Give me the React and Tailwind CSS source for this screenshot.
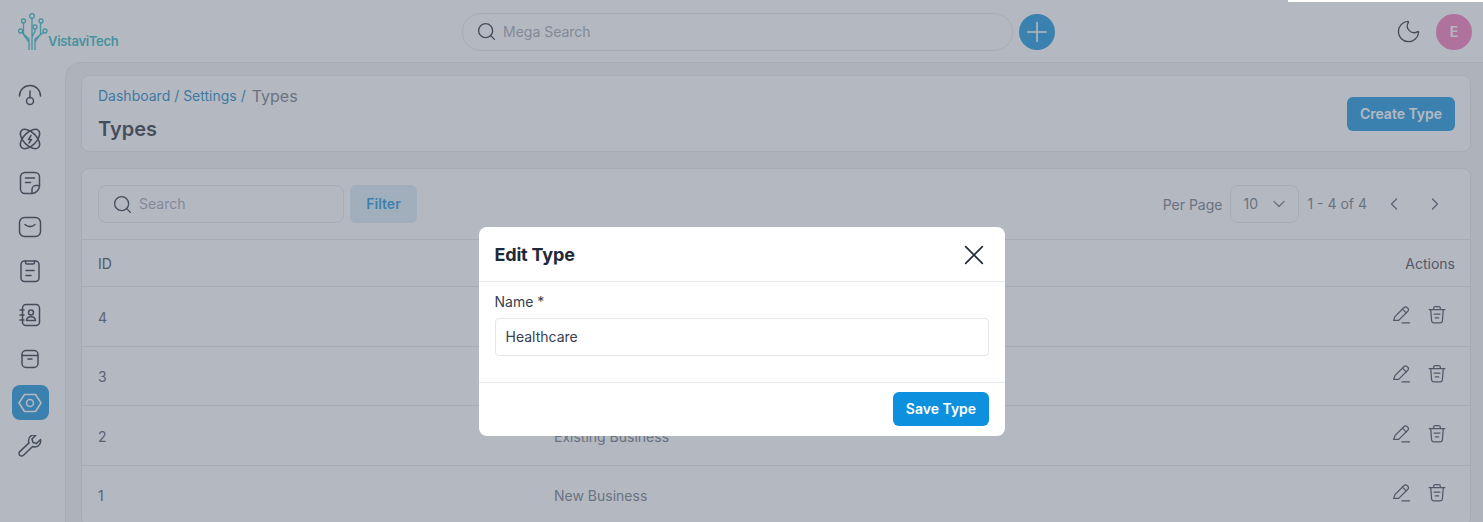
import { ChevronDown, ChevronLeft, ChevronRight, Moon, Plus, Search } from 'lucide-react'

const Icon = ({ children, className = 'text-[#1f2937]', size = 24 }) => (
  <svg width={size} height={size} viewBox="0 0 24 24" fill="none" stroke="currentColor" strokeWidth="1.5" strokeLinecap="round" strokeLinejoin="round" className={className}>
    {children}
  </svg>
)

const navIcons = [
  <>
    <path d="M1.500 13a10.500 10.500 0 0 1 21 0" />
    <path d="M12 8v6.500" />
    <circle cx="12" cy="18" r="3.500" />
  </>,
  <>
    <ellipse cx="12" cy="12" rx="12" ry="6.500" transform="rotate(45 12 12)" />
    <ellipse cx="12" cy="12" rx="12" ry="6.500" transform="rotate(-45 12 12)" />
    <path d="M13 8.500 10.500 12.500h3L11 16" />
  </>,
  <>
    <path d="M14 22.500H7a4.500 4.500 0 0 1-4.500-4.500V6A4.500 4.500 0 0 1 7 1.500h10A4.500 4.500 0 0 1 21.500 6v8.500a8 8 0 0 1-7.500 8z" />
    <path d="M21.500 14.500H18a4 4 0 0 0-4 4v4" />
    <path d="M7.500 7h9M7.500 11.500h5" />
  </>,
  <>
    <rect x="1.500" y="2.500" width="21" height="19" rx="5" />
    <path d="M7 9.500c3.300 2.800 6.700 2.800 10 0" />
  </>,
  <>
    <rect x="3" y="2" width="18" height="20.500" rx="3.500" />
    <path d="M7.500 2v1.500A1.500 1.500 0 0 0 9 5h6a1.500 1.500 0 0 0 1.500-1.500V2" />
    <path d="M8 11.500h8M8 16.500h5" />
  </>,
  <>
    <rect x="4.500" y="1.500" width="17" height="21" rx="3.500" />
    <circle cx="13" cy="9.500" r="2.500" />
    <path d="M8.500 17.500c.3-2.500 2.300-3.800 4.500-3.800s4.200 1.300 4.500 3.800zM2 7h4M2 12h4M2 17h4" />
  </>,
  <>
    <rect x="4" y="3.500" width="16" height="17" rx="4" />
    <path d="M4 8.500h16M10 12h4" />
  </>,
  <>
    <path d="M6.500 3.500h11L23 12l-5.500 8.500h-11L1 12z" />
    <circle cx="12" cy="12" r="3.500" />
  </>,
  <>
    <path transform="translate(0 -1.500)" d="M22.500 6 18.500 10l-3.500-1-1-3.500L18 1.500c-3.500-.8-7.500 1.500-7.500 5.500 0 1 .2 1.700.5 2.400L1.800 18.100a2.600 2.600 0 0 0 3.700 3.700L14.600 13c.7.300 1.400.5 2.400.5 3.800 0 6.300-3.800 5.500-7.500z" />
  </>,
]

const rows = [
  { id: 4, name: 'Healthcare' },
  { id: 3, name: '' },
  { id: 2, name: 'Existing Business' },
  { id: 1, name: 'New Business' },
]

export default function App() {
  return (
    <div className="relative h-[522px] w-[1483px] overflow-hidden bg-white font-['Inter',sans-serif] text-[#1f2937]">
      {/* header */}
      <header className="flex h-[62px] items-center pl-[18px] pr-[11px] pt-[1px]">
        <div className="flex h-9 w-[444px] items-end">
          <svg width="30" height="37" viewBox="0 0 30 37" fill="none" stroke="#22b3bb" strokeWidth="1.300" className="shrink-0">
            <path d="M11 37V26L3.500 19M14 37V5M17 37V26L26 19M11 29 5.500 21.500V10M17 29 22.500 21V10M14 24 17 18V16" />
            <circle cx="14" cy="3" r="2.300" />
            <circle cx="5.500" cy="8" r="2" />
            <circle cx="23" cy="8" r="2" />
            <circle cx="2.500" cy="18" r="2" />
            <circle cx="17" cy="14" r="2" />
            <circle cx="27" cy="18" r="2" />
          </svg>
          <span className="mb-[1px] text-[13px] font-semibold leading-4 tracking-[-0.3px] text-[#22b3bb]">VistaviTech</span>
        </div>
        <div className="flex h-[38px] w-[551px] items-center rounded-full border border-gray-200 pl-[13px] text-sm text-gray-400">
          <Search size={21} strokeWidth={1.500} className="mr-[6px] text-[#1f2937]" />
          Mega Search
        </div>
        <button className="ml-[6px] flex h-9 w-9 items-center justify-center rounded-full bg-[#0d90dd] text-white">
          <Plus size={32} strokeWidth={1.200} />
        </button>
        <Moon size={27} strokeWidth={1.200} className="ml-auto mr-[14px]" />
        <div className="flex h-9 w-9 items-center justify-center rounded-full bg-[#f472b6] text-sm font-semibold text-white">E</div>
      </header>

      <div className="flex">
        {/* sidebar */}
        <nav className="flex w-[65px] flex-col items-center gap-[9px] pt-[15px]">
          {navIcons.map((icon, i) => (
            <div key={i} className={`mr-[5px] flex h-[35px] w-[37px] items-center justify-center rounded-lg ${i === 7 ? 'bg-[#0d90dd] text-white' : 'text-[#1f2937]'}`}>
              <Icon className="" size={24}>{icon}</Icon>
            </div>
          ))}
        </nav>

        {/* main */}
        <main className="h-[460px] flex-1 rounded-tl-2xl border-l border-t border-gray-200 bg-[#f1f2f4] pl-[15px] pr-3 pt-3">
          <section className="flex h-[77px] items-center justify-between rounded-lg border border-gray-200 bg-white pl-4 pr-[15px]">
            <div className="pb-[3px]">
              <div className="flex items-center text-sm leading-5 text-[#0d7fc4]">
                <span>Dashboard / Settings /</span>
                <span className="ml-[6px] text-base text-gray-500">Types</span>
              </div>
              <h1 className="mt-[9px] text-xl font-semibold leading-6 text-[#1f2937]">Types</h1>
            </div>
            <button className="mt-[1px] h-[34px] w-[108px] rounded-md bg-[#0d90dd] text-sm font-semibold text-white">Create Type</button>
          </section>

          <section className="mt-4 rounded-lg border border-gray-200 bg-white">
            <div className="flex h-[71px] items-center border-b border-gray-200 pl-4 pr-[25px]">
              <div className="flex h-[38px] w-[246px] items-center rounded-lg border border-gray-200 pl-[13px] text-sm text-gray-400">
                <Search size={21} strokeWidth={1.500} className="mr-[6px] text-[#1f2937]" />
                Search
              </div>
              <button className="ml-[6px] h-[38px] w-[67px] rounded-md bg-[#d9edf9] text-sm font-semibold text-[#0d90dd]">Filter</button>
              <span className="ml-auto mt-[2px] text-sm text-gray-500">Per Page</span>
              <div className="ml-2 flex h-[38px] w-[69px] items-center justify-between rounded-lg border border-gray-200 pl-3 pr-[9px] text-sm text-gray-500">
                10
                <ChevronDown size={20} strokeWidth={1.500} />
              </div>
              <span className="ml-2 text-sm text-gray-500">1 - 4 of 4</span>
              <ChevronLeft size={20} strokeWidth={1.500} className="ml-[17px] text-gray-600" />
              <ChevronRight size={20} strokeWidth={1.500} className="ml-[21px] text-gray-600" />
            </div>
            <div className="flex h-[47px] items-center justify-between border-b border-gray-200 pl-4 pr-[15px] pt-[2px] text-sm text-[#374151]">
              <span>ID</span>
              <span>Actions</span>
            </div>
            {rows.map((row) => (
              <div key={row.id} className="flex h-[59.500px] items-center border-b border-gray-200 pl-4 pr-[23px] text-sm text-gray-500">
                <span className="mt-[3px] w-[456px] text-gray-600">{row.id}</span>
                <span className="mt-[3px]">{row.name}</span>
                <div className="ml-auto flex items-center gap-[15px] pb-[3px] text-[#374151]">
                  <Icon className="" size={20}>
                    <path d="M2 18.500 3.500 14 14.500 3a2.300 2.300 0 0 1 3.500 0l1 1a2.300 2.300 0 0 1 0 3.500L8 18.500z" />
                    <path d="M12.500 5 17 9.500M12 21.500h9" />
                  </Icon>
                  <Icon className="" size={20}>
                    <path d="M2.500 5.500h19M8 5.500V4a2 2 0 0 1 2-2h4a2 2 0 0 1 2 2v1.500" />
                    <path d="M4.500 5.500 5.500 19a3 3 0 0 0 3 2.500h7a3 3 0 0 0 3-2.500l1-13.500" />
                    <path d="M8.500 11h7M10 15.500h4" />
                  </Icon>
                </div>
              </div>
            ))}
          </section>
        </main>
      </div>

      {/* modal */}
      <div className="absolute inset-0 flex justify-center bg-gray-500/50 pt-[227px]">
        <div className="h-[209px] w-[526px] rounded-lg bg-white">
          <div className="flex h-[55px] items-center justify-between border-b border-gray-200 pl-4 pr-[21px] pt-[1px]">
            <h2 className="text-lg font-bold tracking-[-0.01em] text-[#1f2937]">Edit Type</h2>
            <Icon className="" size={20}>
              <path strokeWidth="2" d="M2 2 22 22M22 2 2 22" />
            </Icon>
          </div>
          <div className="h-[101px] border-b border-gray-200 px-4 pt-[11px]">
            <label className="block text-sm leading-[17px] text-[#374151]">Name *</label>
            <input
              readOnly
              value="Healthcare"
              className="mt-[8px] h-[38px] w-full rounded border border-gray-200 px-[10px] pb-[1px] text-sm text-[#374151]"
            />
          </div>
          <div className="flex justify-end px-4 pt-[9px]">
            <button className="h-[34px] w-[96px] rounded-md bg-[#0d90dd] pl-[1px] text-sm font-semibold text-white">Save Type</button>
          </div>
        </div>
      </div>

      <div className="absolute right-0 top-0 h-[2px] w-[195px] bg-white" />
    </div>
  )
}
